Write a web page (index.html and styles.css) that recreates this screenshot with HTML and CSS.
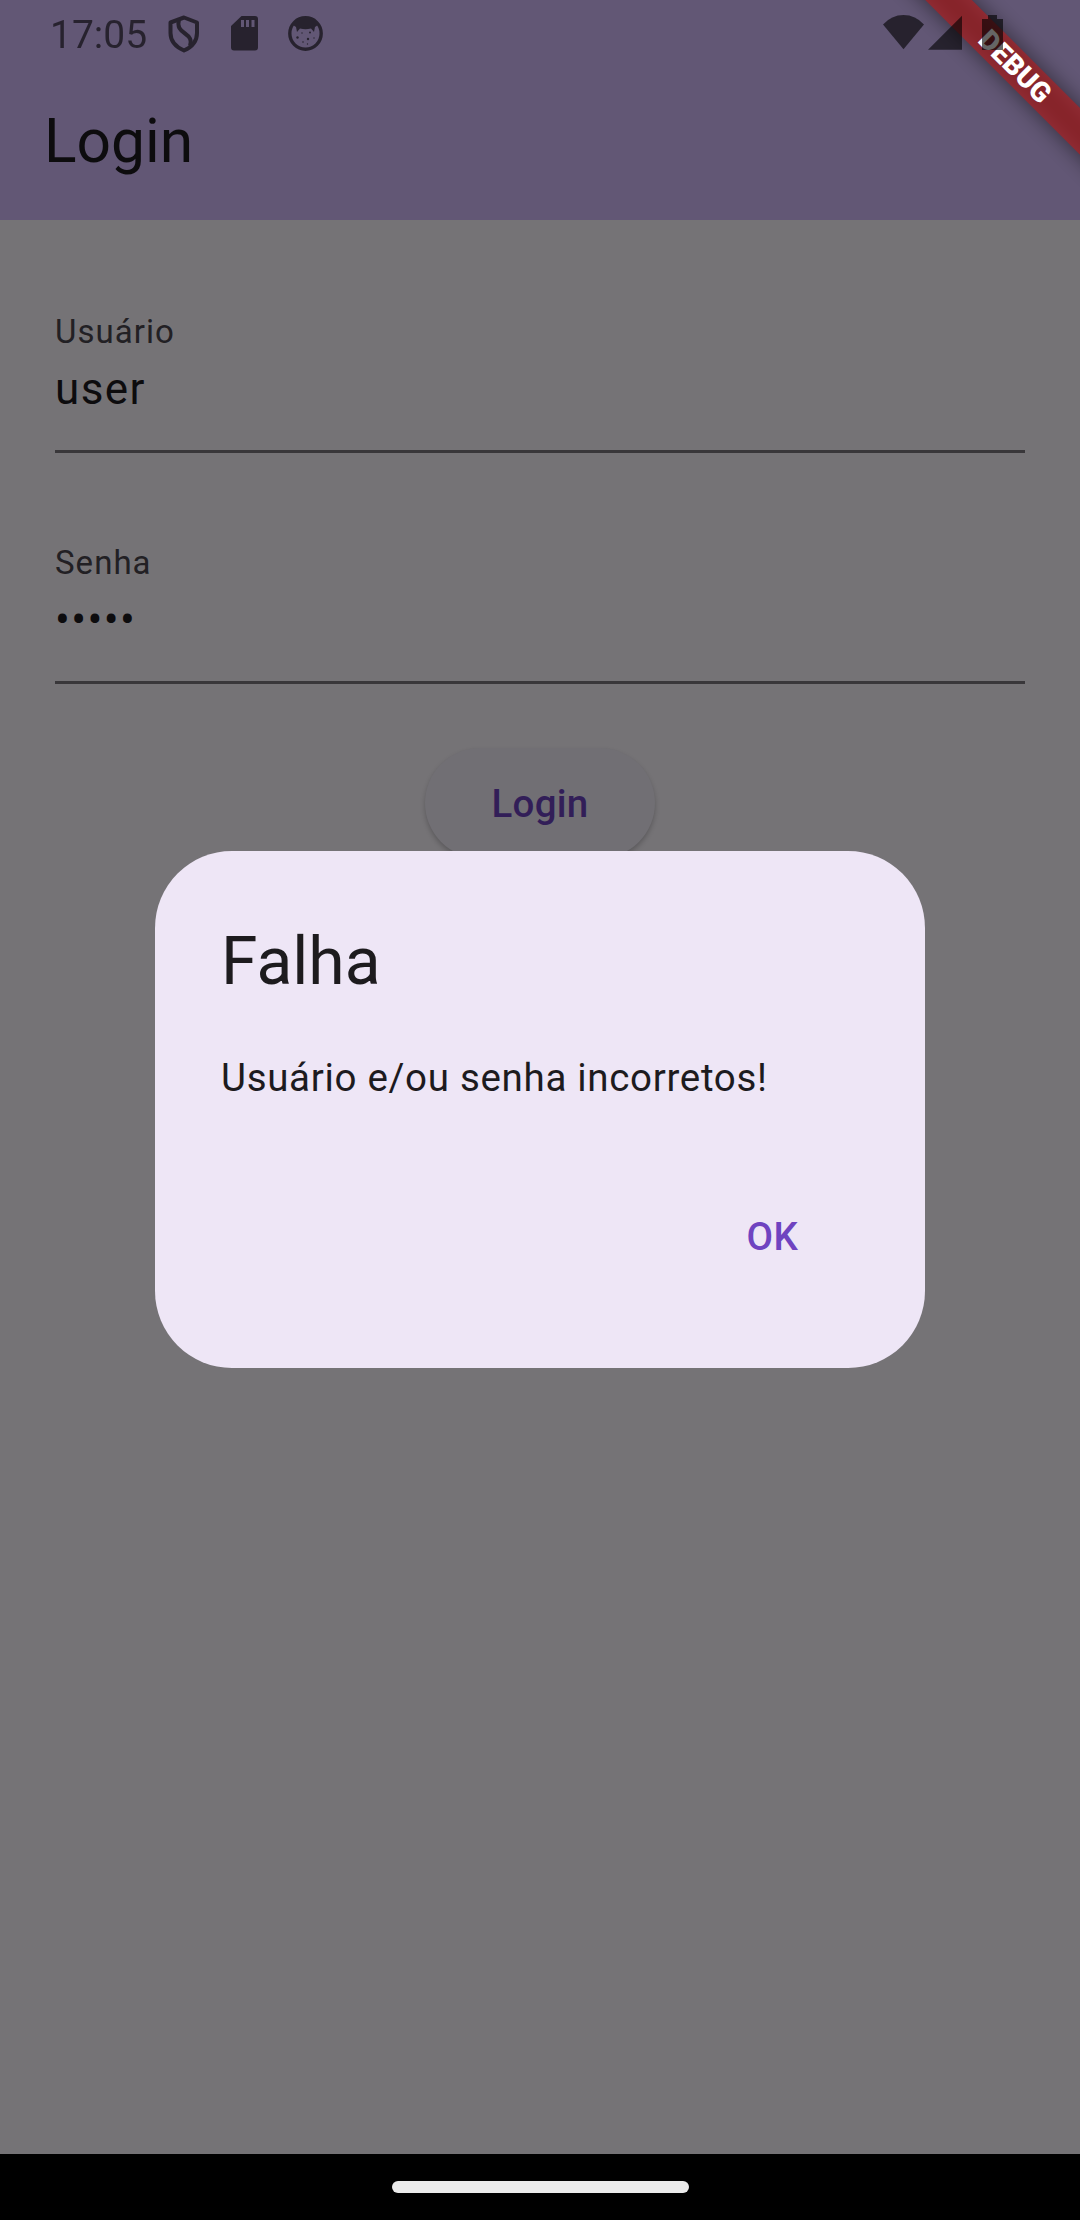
FILE: index.html
```html
<!DOCTYPE html>
<html lang="pt-BR">
<head>
<meta charset="utf-8">
<title>Login</title>
<link rel="stylesheet" href="styles.css">
</head>
<body>
<div class="screen">
  <header class="app-bar">
    <h1 class="app-title">Login</h1>
  </header>
  <main class="form">
    <div class="field">
      <span class="label">Usuário</span>
      <span class="value">user</span>
    </div>
    <div class="field">
      <span class="label">Senha</span>
      <span class="value password">•••••</span>
    </div>
    <button class="login-button">Login</button>
  </main>
  <nav class="nav-bar"><div class="handle"></div></nav>

  <section class="dialog" role="dialog">
    <h2 class="dialog-title">Falha</h2>
    <p class="dialog-text">Usuário e/ou senha incorretos!</p>
    <button class="dialog-action">OK</button>
  </section>

  <div class="debug-banner"><span class="debug-text">DEBUG</span></div>

  <div class="status-bar">
    <span class="clock">17:05</span>
    <svg class="shield" width="32" height="38" viewBox="0 0 32 38" fill="none" stroke="currentColor" stroke-width="4" stroke-linejoin="round">
      <path d="M16 2.5L2.5 7.5V18C2.5 26 8 32 16 35.5C24 32 29 26 29 18V7.5Z"/>
      <path d="M11 4.500C9 12 12 15 17 18.500C22 22 24 25 22 31"/>
    </svg>
    <svg class="sd" width="27" height="35" viewBox="0 0 27 35" fill="currentColor">
      <path fill-rule="evenodd" d="M10.500 0H24Q27 0 27 3V31.500Q27 34.500 24 34.500H3Q0 34.500 0 31.500V10ZM10 4V11H13V4ZM15 4V11H18V4ZM20.500 4V11H23.500V4Z"/>
    </svg>
    <svg class="face" width="35" height="35" viewBox="0 0 35 35" fill="currentColor">
      <circle cx="17.500" cy="17.500" r="15.700" fill="none" stroke="currentColor" stroke-width="3.400"/>
      <path d="M5 9Q10 2 17.500 2T30 9L27 11L26 16L23 12.500Q17.500 14 12 12.500L9 16L8 11Z"/>
      <circle cx="9.500" cy="21.500" r="1.200"/><circle cx="20" cy="23" r="1.200"/><circle cx="22" cy="16.500" r="1"/><circle cx="14" cy="17" r=".7"/><circle cx="15" cy="26" r=".8"/><circle cx="26" cy="22" r=".7"/><circle cx="19.500" cy="28" r=".7"/>
    </svg>
    <span class="spacer"></span>
    <svg width="120" height="35" viewBox="0 0 120 35" fill="currentColor">
      <path d="M20.500 34.300L0 9.500Q8.500 0 20.500 0T41 9.500Z"/>
      <path d="M45 34.700H79V.7Z"/>
      <path d="M99 4H105V0H114V4H120V35H99Z"/>
    </svg>
  </div>
</div>
</body>
</html>
```
FILE: styles.css
```css
* { box-sizing: border-box; }
body { margin: 0; font-family: Roboto, "Liberation Sans", sans-serif; }
h1, h2, p { margin: 0; font-weight: 400; }
button { border: 0; padding: 0; font: inherit; }

.screen {
  position: relative;
  width: 1080px;
  height: 2220px;
  overflow: hidden;
  display: flex;
  flex-direction: column;
  background: #757376;
}

.app-bar {
  height: 220px;
  padding: 103px 44px 0;
  background: #625775;
}
.app-title { font-size: 60.5px; line-height: 78px; color: #0d0c0e; }

.form {
  flex: 1;
  display: flex;
  flex-direction: column;
  align-items: stretch;
  padding: 89px 55px 0;
}
.field {
  display: flex;
  flex-direction: column;
  gap: 5px;
  height: 143.500px;
  padding-top: 1px;
  margin-bottom: 87.500px;
  border-bottom: 3px solid #39373a;
}
.label { font-size: 33px; line-height: 44px; letter-spacing: 1.030px; color: #222024; }
.value { font-size: 44px; line-height: 60px; letter-spacing: 1.375px; color: #0d0c0e; }

.login-button {
  align-self: center;
  width: 230px;
  height: 110px;
  margin-top: -23.500px;
  padding-top: 2px;
  border-radius: 55px;
  background: #716f74;
  box-shadow: 0 3px 5px rgba(0, 0, 0, .22);
  color: #321e58;
  font-size: 38.500px;
  font-weight: 500;
  letter-spacing: .275px;
}

.nav-bar {
  height: 66px;
  display: flex;
  align-items: center;
  justify-content: center;
  background: #000;
}
.handle { width: 297px; height: 11.500px; border-radius: 6px; background: #ebebeb; }

.dialog {
  position: absolute;
  left: 155px;
  top: 851.300px;
  width: 770px;
  height: 517.200px;
  padding: 67px 66px 65px;
  border-radius: 77px;
  background: #eee6f6;
  display: flex;
  flex-direction: column;
}
.dialog-title { font-size: 66px; line-height: 88px; color: #1d1b1e; }
.dialog-text {
  margin-top: 44px;
  font-size: 38.500px;
  line-height: 55px;
  letter-spacing: .6875px;
  color: #1d1b1e;
}
.dialog-action {
  align-self: flex-end;
  margin-top: 76px;
  padding: 0 33px;
  margin-right: 28px;
  height: 110px;
  background: none;
  color: #6f43c0;
  font-size: 38.500px;
  font-weight: 500;
  letter-spacing: .275px;
}

.debug-banner {
  position: absolute;
  left: 795px;
  top: 49.500px;
  width: 440px;
  height: 33.400px;
  transform: rotate(45deg);
  display: flex;
  align-items: center;
  justify-content: center;
}
.debug-banner::before,
.debug-banner::after {
  content: "";
  position: absolute;
  inset: 0;
}
.debug-banner::before {
  z-index: -2;
  background: rgba(0, 0, 0, .5);
  filter: blur(11px);
}
.debug-banner::after {
  z-index: -1;
  background: rgba(183, 28, 28, .627);
}
.debug-text { color: #fff; font-size: 28px; line-height: 33px; font-weight: 900; }

.status-bar {
  position: absolute;
  inset: 0 0 auto 0;
  height: 66px;
  padding: 0 77px 0 50px;
  display: flex;
  align-items: flex-start;
  color: #000;
  opacity: .6;
}
.status-bar svg { flex: none; margin-top: 15px; }
.clock { width: 117px; font-size: 39px; line-height: 70px; }
.status-bar .shield { margin-left: 1px; }
.status-bar .sd { margin-left: 31px; margin-top: 16px; }
.status-bar .face { margin-left: 30px; margin-top: 16px; }
.spacer { flex: 1; }
```
